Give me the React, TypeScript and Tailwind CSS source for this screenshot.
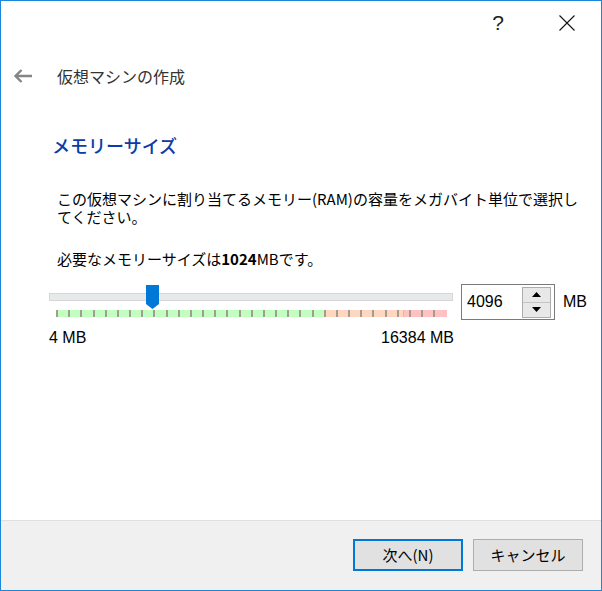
import { useState } from 'react';

const MAX_MB = 16384;
const TICK_COUNT = 32;

function BackArrow() {
  return (
    <svg width="20" height="14" viewBox="0 0 20 14" fill="none">
      <path d="M19 7H2.5M8.5 1L2.5 7l6 6" stroke="#858585" strokeWidth="2.4" />
    </svg>
  );
}

function CloseGlyph() {
  return (
    <svg width="16" height="16" viewBox="0 0 16 16" fill="none">
      <path d="M0.5 0.5l15 15M15.5 0.5l-15 15" stroke="#111" strokeWidth="1.1" />
    </svg>
  );
}

function Thumb() {
  return (
    <svg width="13" height="24" viewBox="0 0 13 24">
      <path d="M0 0H13V19L6.5 24L0 19Z" fill="#0078d7" />
    </svg>
  );
}

function SpinArrow({ up }: { up?: boolean }) {
  return (
    <svg width="9" height="5" viewBox="0 0 9 5">
      <path d={up ? 'M0 5L4.5 0L9 5Z' : 'M0 0L9 0L4.5 5Z'} fill="#000" />
    </svg>
  );
}

export default function App() {
  const [memory] = useState(4096);
  // handle travels 392px along the 405px groove
  const thumbLeft = Math.round((memory / MAX_MB) * 392);

  return (
    <div className="w-[602px] h-[591px] border border-[#1c86dc] bg-white flex flex-col text-black font-['Noto_Sans_CJK_JP',sans-serif]">
      <div className="flex-1 flex flex-col">
        {/* caption buttons */}
        <div className="h-[43px] flex items-center justify-end gap-[23px] pr-[11px]">
          <div className="w-[46px] flex justify-center text-[21px] leading-[22px] text-[#222] font-['Liberation_Sans',sans-serif]">?</div>
          <div className="w-[46px] flex justify-center"><CloseGlyph /></div>
        </div>

        {/* wizard nav */}
        <div className="h-[64px] flex items-center pl-[12px] gap-[24px]">
          <BackArrow />
          <span className="text-[16px] leading-[20px] text-[#333]">仮想マシンの作成</span>
        </div>

        <h1 className="mt-[24px] pl-[51px] text-[18px] leading-[26px] text-[#0a3da8] font-medium">メモリーサイズ</h1>

        <p className="mt-[32px] pl-[56px] text-[15px] leading-[18px]">
          この仮想マシンに割り当てるメモリー(RAM)の容量をメガバイト単位で選択し
          <br />
          てください。
        </p>

        <p className="mt-[24px] pl-[56px] text-[15px] leading-[18px]">
          必要なメモリーサイズは<span className="font-semibold">1024</span>MBです。
        </p>

        {/* slider + spinbox */}
        <div className="mt-[16px] pl-[47px] flex items-start gap-[8px]">
          <div className="relative w-[405px] h-[36px] flex flex-col">
            <div className="mt-[9px] h-[8px] w-[404px] ml-[1px] border border-[#d6d6d6] bg-[#e7eaea]" />
            <div className="relative mt-[9px] ml-[8px] w-[391px] h-[7px] flex">
              <div className="w-[269px] bg-[#c0ffc0]" />
              <div className="w-[1px] bg-[#d8ecb0]" />
              <div className="w-[77px] bg-[#ffd6c0]" />
              <div className="w-[1px] bg-[#ffa8a0]" />
              <div className="flex-1 bg-[#ffc2c2]" />
              {Array.from({ length: TICK_COUNT }).map((_, i) => (
                <div
                  key={i}
                  className="absolute top-0 h-[7px] w-[2px] bg-[#a39c90]"
                  style={{ left: Math.round(i * 12.17) }}
                />
              ))}
            </div>
            <div className="absolute top-[1px]" style={{ left: thumbLeft }}>
              <Thumb />
            </div>
          </div>

          <div className="w-[94px] h-[36px] border border-[#7a7a7a] flex items-center justify-between pl-[5px] pr-[3px]">
            <span className="text-[16px] leading-[20px] font-['Liberation_Sans',sans-serif]">{memory}</span>
            <div className="w-[29px] h-[31px] flex flex-col border border-[#adadad]">
              <div className="flex-1 bg-[#e8e8e8] flex items-center justify-center border-b border-[#c4c4c4]"><SpinArrow up /></div>
              <div className="flex-1 bg-[#e8e8e8] flex items-center justify-center"><SpinArrow /></div>
            </div>
          </div>
          <span className="self-center text-[16px] leading-[20px] font-['Liberation_Sans',sans-serif]">MB</span>
        </div>

        <div className="mt-[9px] ml-[48px] w-[405px] flex justify-between text-[16px] leading-[17px] font-['Liberation_Sans',sans-serif]">
          <span>4 MB</span>
          <span>16384 MB</span>
        </div>
      </div>

      {/* footer */}
      <div className="h-[70px] border-t border-[#dfdfdf] bg-[#f0f0f0] flex justify-end items-start gap-[10px] pt-[18px] pr-[18px]">
        <button className="w-[110px] h-[32px] border-2 border-[#0078d7] bg-[#e1e1e1] text-[15px] leading-[20px]">次へ(N)</button>
        <button className="w-[110px] h-[32px] border border-[#adadad] bg-[#e1e1e1] text-[15px] leading-[20px]">キャンセル</button>
      </div>
    </div>
  );
}
